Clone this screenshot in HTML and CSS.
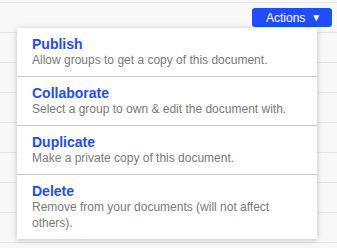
FILE: index.html
```html
<!doctype html>
<html lang="en">
<head>
  <meta charset="UTF-8">
  <meta name="viewport" content="width=device-width, initial-scale=1.0">
  <title>Document actions</title>
  <link rel="stylesheet" href="styles.css">
</head>
<body>
  <div class="page">
    <div class="rows">
      <div class="row"></div>
      <div class="row"></div>
      <div class="row"></div>
      <div class="row"></div>
      <div class="row"></div>
      <div class="row"></div>
      <div class="row"></div>
      <div class="row"></div>
      <div class="row row-last"></div>
    </div>

    <div class="actions">
      <button type="button" class="btn-actions">Actions <span class="caret">&#9660;</span></button>

      <ul class="menu">
        <li class="menu-item">
          <a href="#" class="menu-title">Publish</a>
          <p class="menu-desc">Allow groups to get a copy of this document.</p>
        </li>
        <li class="menu-item">
          <a href="#" class="menu-title">Collaborate</a>
          <p class="menu-desc">Select a group to own &amp; edit the document with.</p>
        </li>
        <li class="menu-item">
          <a href="#" class="menu-title">Duplicate</a>
          <p class="menu-desc">Make a private copy of this document.</p>
        </li>
        <li class="menu-item">
          <a href="#" class="menu-title">Delete</a>
          <p class="menu-desc">Remove from your documents (will not affect others).</p>
        </li>
      </ul>
    </div>
  </div>
</body>
</html>
```

FILE: styles.css
```css
:root {
  --blue: #1f4dff;
  --text-muted: #7a7a7a;
  --line: #e4e4e4;
}

* {
  box-sizing: border-box;
  margin: 0;
  padding: 0;
}

body {
  font-family: "Liberation Sans", Arial, sans-serif;
  background: #f8f8f8;
  overflow: hidden;
}

.page {
  position: relative;
  height: 248px;
  overflow: hidden;
}

.rows {
  padding-top: 2px;
}

.row {
  height: 30px;
  border-top: 1px solid var(--line);
}

.row-last {
  height: 4px;
}

.actions {
  position: absolute;
  top: 8px;
  right: 5px;
}

.btn-actions {
  display: flex;
  align-items: center;
  gap: 6px;
  height: 19px;
  width: 80px;
  padding: 0 0 0 14px;
  background: var(--blue);
  color: #fff;
  border: none;
  border-radius: 3px;
  font-family: inherit;
  font-size: 12px;
  cursor: pointer;
}

.caret {
  font-size: 10px;
  line-height: 1;
}

.menu {
  list-style: none;
  position: absolute;
  top: 20px;
  right: 15px;
  width: 300px;
  background: #fff;
  box-shadow: 0 1px 6px rgba(0, 0, 0, 0.22);
}

.menu-item {
  padding: 8px 15px;
  border-bottom: 1px solid #c9c9c9;
}

.menu-item:last-child {
  border-bottom: none;
}

.menu-title {
  display: block;
  color: var(--blue);
  font-size: 14px;
  font-weight: bold;
  line-height: 16px;
  text-decoration: none;
}

.menu-desc {
  color: var(--text-muted);
  font-size: 12px;
  line-height: 16px;
}
```
